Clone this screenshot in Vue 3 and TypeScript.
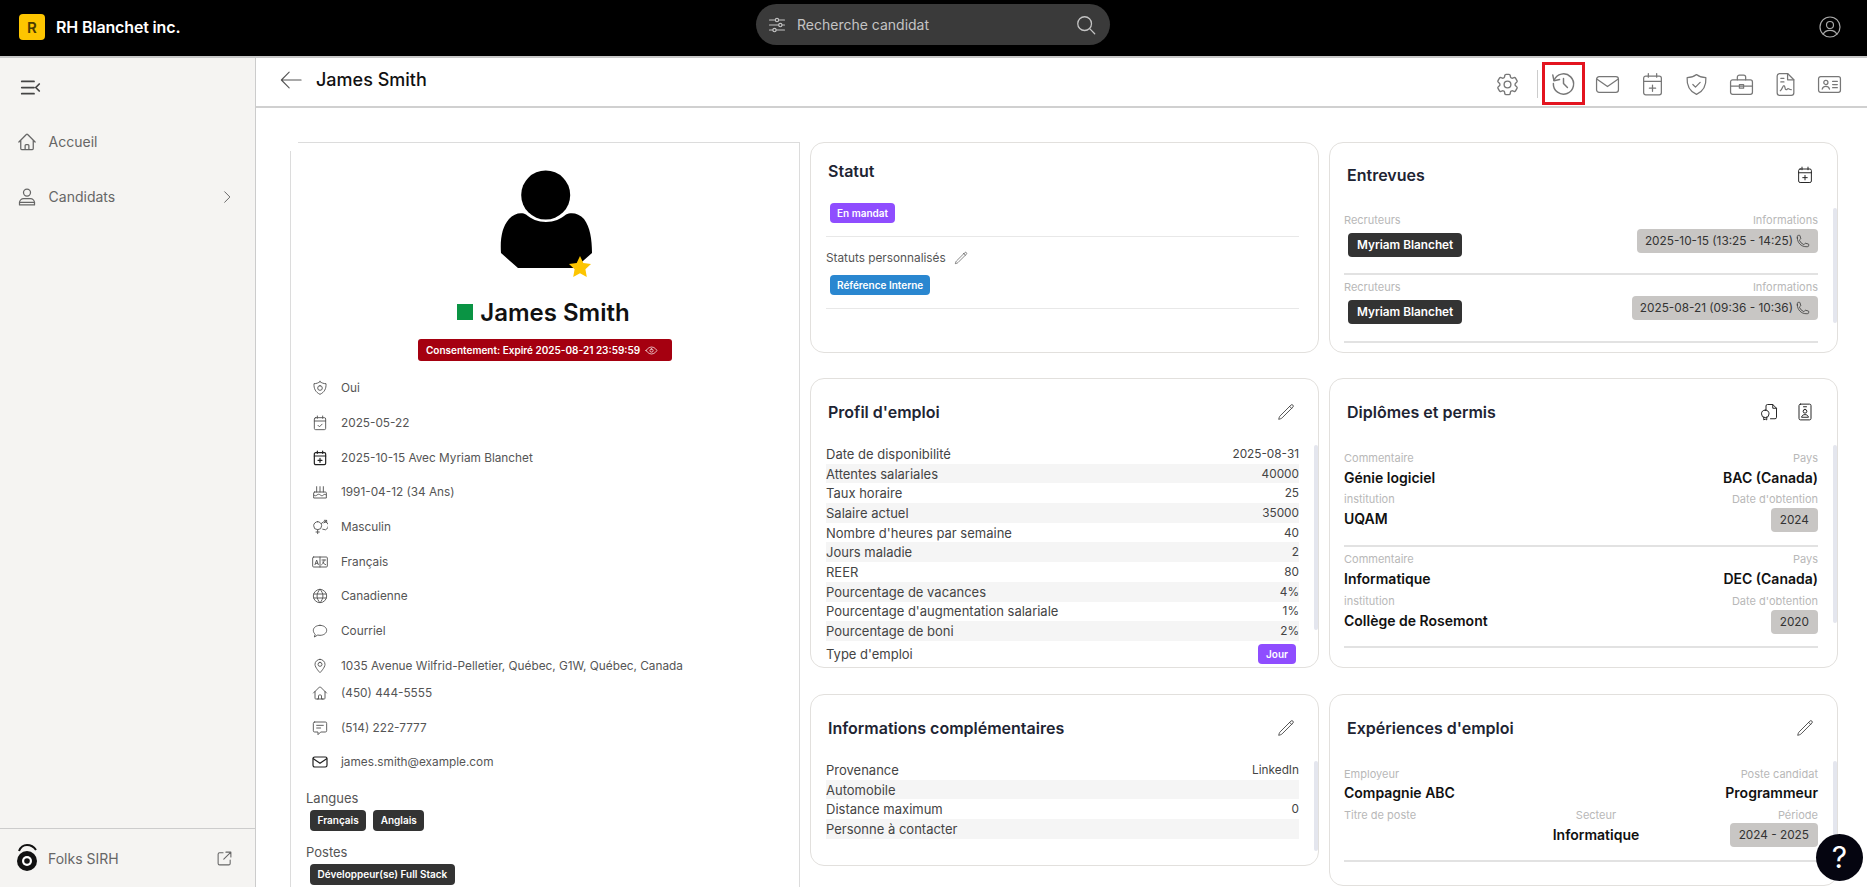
<script setup lang="ts">
import { h } from 'vue'

const icons: Record<string, string[]> = {
  sliders: ['M3 6h7M14 6h7M3 12h11M18 12h3M3 18h4M11 18h10', 'M12 4a2 2 0 1 1 0 4a2 2 0 1 1 0-4Z', 'M16 10a2 2 0 1 1 0 4a2 2 0 1 1 0-4Z', 'M9 16a2 2 0 1 1 0 4a2 2 0 1 1 0-4Z'],
  search: ['M10.5 3a7.5 7.5 0 1 1 0 15a7.5 7.5 0 1 1 0-15Z', 'M16 16l5.5 5.5'],
  account: ['M12 2a10 10 0 1 1 0 20a10 10 0 1 1 0-20Z', 'M12 6.5a3.5 3.5 0 1 1 0 7a3.5 3.5 0 1 1 0-7Z', 'M5.2 19.2c1-2.6 3.6-3.9 6.8-3.9s5.8 1.300 6.800 3.900'],
  gear: ['M9.594 3.94c.09-.542.56-.94 1.11-.94h2.593c.55 0 1.02.398 1.11.94l.213 1.281c.063.374.313.686.645.87.074.04.147.083.22.127.325.196.72.257 1.075.124l1.217-.456a1.125 1.125 0 0 1 1.37.49l1.296 2.247a1.125 1.125 0 0 1-.26 1.431l-1.003.827c-.293.241-.438.613-.43.992a7.723 7.723 0 0 1 0 .255c-.008.378.137.75.43.991l1.004.827c.424.35.534.955.26 1.43l-1.298 2.247a1.125 1.125 0 0 1-1.369.491l-1.217-.456c-.355-.133-.75-.072-1.076.124a6.47 6.47 0 0 1-.22.128c-.331.183-.581.495-.644.869l-.213 1.281c-.09.543-.56.94-1.11.94h-2.594c-.55 0-1.019-.398-1.11-.94l-.213-1.281c-.062-.374-.312-.686-.644-.87a6.52 6.52 0 0 1-.22-.127c-.325-.196-.72-.257-1.076-.124l-1.217.456a1.125 1.125 0 0 1-1.369-.49l-1.297-2.247a1.125 1.125 0 0 1 .26-1.431l1.004-.827c.292-.24.437-.613.43-.991a6.932 6.932 0 0 1 0-.255c.007-.38-.138-.751-.43-.992l-1.004-.827a1.125 1.125 0 0 1-.26-1.43l1.297-2.247a1.125 1.125 0 0 1 1.37-.491l1.216.456c.356.133.751.072 1.076-.124.072-.044.146-.086.22-.128.332-.183.582-.495.644-.869l.214-1.28Z', 'M15 12a3 3 0 1 1-6 0 3 3 0 0 1 6 0Z'],
  history: ['M3.6 9.200A9 9 0 1 1 3 12', 'M2.500 4.500l1 5 5-1', 'M12 7.500V12l3.500 3.500'],
  mail: ['M4 4.500h16a2.500 2.500 0 0 1 2.500 2.500v10a2.500 2.500 0 0 1-2.500 2.500H4A2.500 2.500 0 0 1 1.500 17V7A2.500 2.500 0 0 1 4 4.500Z', 'M2 7l10 7 10-7'],
  calPlus: ['M5.500 4h13A2 2 0 0 1 20.500 6v14a2 2 0 0 1-2 2h-13a2 2 0 0 1-2-2V6a2 2 0 0 1 2-2Z', 'M3.500 9h17M8 1.500V5M16 1.500V5M12 12.500v6M9 15.500h6'],
  calCheck: ['M5.500 4h13A2 2 0 0 1 20.500 6v14a2 2 0 0 1-2 2h-13a2 2 0 0 1-2-2V6a2 2 0 0 1 2-2Z', 'M3.500 9h17M8 1.500V5M16 1.500V5M9 15.500l2.200 2.200 4-4'],
  shield: ['M12 2.500c2.500 2 5.500 3 9 3 .5 7.500-2.500 13-9 16-6.500-3-9.500-8.500-9-16 3.500 0 6.500-1 9-3Z', 'M8.500 12l2.500 2.500 4.500-4.500'],
  shieldEye: ['M12 2.500c2.500 2 5.500 3 9 3 .5 7.500-2.500 13-9 16-6.500-3-9.500-8.500-9-16 3.500 0 6.500-1 9-3Z', 'M12 8.500a3.500 3.500 0 1 1 0 7a3.500 3.500 0 1 1 0-7Z'],
  briefcase: ['M3.500 7.500h17a2 2 0 0 1 2 2v10a2 2 0 0 1-2 2h-17a2 2 0 0 1-2-2v-10a2 2 0 0 1 2-2Z', 'M8 7.500V5a2 2 0 0 1 2-2h4a2 2 0 0 1 2 2v2.500M1.500 13.500h21', 'M10 12h4v3.500h-4Z'],
  fileSign: ['M6 1.500h8l6 6V20a2.500 2.500 0 0 1-2.500 2.500h-11A2.500 2.500 0 0 1 4 20V4a2.500 2.500 0 0 1 2-2.500Z', 'M14 1.500V7.500h6M7.500 6h3M7.500 9.500h3M7 18c2-1 2-5 3.500-5s.5 4 2 4 1-1 2-1 1 1 3 1'],
  idCard: ['M3.500 4.500h17a2 2 0 0 1 2 2v11a2 2 0 0 1-2 2h-17a2 2 0 0 1-2-2v-11a2 2 0 0 1 2-2Z', 'M8.500 8a2 2 0 1 1 0 4a2 2 0 1 1 0-4Z', 'M5 16.500c.5-2 2-2.700 3.500-2.700s3 .7 3.500 2.700M15 9h4.500M15 12h4.500M15 15h4.500'],
  back: ['M23 12H2M10 3.500L1.500 12l8.500 8.500'],
  collapse: ['M2 5h14M2 12h14M2 19h14M22 8l-4 4 4 4'],
  home: ['m2.250 12 8.954-8.955c.44-.439 1.152-.439 1.591 0L21.750 12M4.500 9.750v10.125c0 .621.504 1.125 1.125 1.125H9.750v-4.875c0-.621.504-1.125 1.125-1.125h2.250c.621 0 1.125.504 1.125 1.125V21h4.125c.621 0 1.125-.504 1.125-1.125V9.750M8.250 21h8.250'],
  user: ['M12 2.500a4.200 4.200 0 1 1 0 8.400a4.200 4.200 0 1 1 0-8.400Z', 'M8 14h8a5 5 0 0 1 5 5v2.500H3V19a5 5 0 0 1 5-5Z', 'M3 18.500h18'],
  chevron: ['M8 3l9 9-9 9'],
  pencil: ['m16.862 4.487 1.687-1.688a1.875 1.875 0 1 1 2.652 2.652L6.832 19.820a4.500 4.500 0 0 1-1.897 1.130l-2.685.8.8-2.685a4.500 4.500 0 0 1 1.130-1.897L16.863 4.487Zm0 0L19.500 7.125'],
  external: ['M10 4H5a2 2 0 0 0-2 2v13a2 2 0 0 0 2 2h13a2 2 0 0 0 2-2v-5', 'M14 3h7v7M21 3L11 13'],
  phone: ['M2.250 6.750c0 8.284 6.716 15 15 15h2.250a2.250 2.250 0 0 0 2.250-2.250v-1.372c0-.516-.351-.966-.852-1.091l-4.423-1.106c-.44-.11-.902.055-1.173.417l-.97 1.293c-.282.376-.769.542-1.210.38a12.035 12.035 0 0 1-7.143-7.143c-.162-.441.004-.928.38-1.210l1.293-.97c.363-.271.527-.734.417-1.173L6.963 3.102a1.125 1.125 0 0 0-1.091-.852H4.500A2.250 2.250 0 0 0 2.250 4.500v2.250Z'],
  eye: ['M2 12s3.500-6.500 10-6.500S22 12 22 12s-3.500 6.500-10 6.500S2 12 2 12Z', 'M12 9a3 3 0 1 1 0 6a3 3 0 1 1 0-6Z'],
  cake: ['M4 12h16a1.500 1.500 0 0 1 1.500 1.500V21h-19v-7.500A1.500 1.500 0 0 1 4 12Z', 'M2.500 16.500c3 1.500 3 1.500 5 0s3-1.500 5 0 3 1.500 4.500 0 3-1 4.500 0M7 4v8M12 4v8M17 4v8'],
  gender: ['M8.500 4a6 6 0 1 1 0 12a6 6 0 1 1 0-12Z', 'M8.500 16v6M6 19.500h5M14 6.500a6 6 0 1 1 2 9M18 6l4-4M18.500 2H22v3.500'],
  lang: ['M2.500 4.500h19a1.500 1.500 0 0 1 1.500 1.500v12a1.500 1.500 0 0 1-1.500 1.500h-19A1.500 1.500 0 0 1 1 18V6a1.500 1.500 0 0 1 1.500-1.500Z', 'M12 4.500v15M4.500 16l2.500-7 2.500 7M5.500 14h3M15 9h5.500M18 9v1c0 3-2 5-3.500 6M16 12c.800 1.700 2 3 4.500 4'],
  globe: ['M12 2a10 10 0 1 1 0 20a10 10 0 1 1 0-20Z', 'M2.500 9h19M2.500 15h19M12 2c-6 6-6 14 0 20M12 2c6 6 6 14 0 20'],
  bubble: ['M12 3.500c5.500 0 10 3.200 10 7.500s-4.500 7.500-10 7.500c-1.200 0-2.300-.15-3.400-.45L3.500 21l1.300-4.200C3 15.400 2 13.300 2 11c0-4.300 4.500-7.500 10-7.500Z'],
  pin: ['M12 2a7.500 7.500 0 0 1 7.500 7.500c0 5-7.500 12.500-7.500 12.500S4.500 14.500 4.500 9.500A7.500 7.500 0 0 1 12 2Z', 'M12 6.500a3 3 0 1 1 0 6a3 3 0 1 1 0-6Z'],
  sms: ['M4 3h16a2 2 0 0 1 2 2v11a2 2 0 0 1-2 2h-7l-4 4v-4H4a2 2 0 0 1-2-2V5a2 2 0 0 1 2-2Z', 'M7 8h10M7 12h6'],
  degree: ['M8 10V4a2 2 0 0 1 2-2h7l5 5v12a2 2 0 0 1-2 2h-6', 'M17 2v5h5', 'M7 9.500a5 5 0 1 1 0 10a5 5 0 1 1 0-10Z', 'M5 19v3.500l2-1 2 1V19'],
  badge: ['M6 1.500h12a2 2 0 0 1 2 2v17a2 2 0 0 1-2 2H6a2 2 0 0 1-2-2v-17a2 2 0 0 1 2-2Z', 'M10 5h4', 'M12 8.500a2.500 2.500 0 1 1 0 5a2.500 2.500 0 1 1 0-5Z', 'M7.500 18.500c.4-2 2.200-3 4.500-3s4.100 1 4.500 3Z'],
}

const Ico = (props: { n: string; s?: number; w?: number }) =>
  h(
    'svg',
    { viewBox: '0 0 24 24', width: props.s ?? 18, height: props.s ?? 18, fill: 'none', stroke: 'currentColor', 'stroke-width': props.w ?? 1.5, 'stroke-linecap': 'round', 'stroke-linejoin': 'round' },
    (icons[props.n] ?? []).map((d) => h('path', { d })),
  )
Ico.props = ['n', 's', 'w']

const toolIcons = ['mail', 'calPlus', 'shield', 'briefcase', 'fileSign', 'idCard']

const facts = [
  { i: 'shieldEye', t: 'Oui' },
  { i: 'calCheck', t: '2025-05-22' },
  { i: 'calPlus', t: '2025-10-15 Avec Myriam Blanchet', dark: true },
  { i: 'cake', t: '1991-04-12 (34 Ans)' },
  { i: 'gender', t: 'Masculin' },
  { i: 'lang', t: 'Français' },
  { i: 'globe', t: 'Canadienne' },
  { i: 'bubble', t: 'Courriel' },
  { i: 'pin', t: '1035 Avenue Wilfrid-Pelletier, Québec, G1W, Québec, Canada', tight: true },
  { i: 'home', t: '(450) 444-5555' },
  { i: 'sms', t: '(514) 222-7777' },
  { i: 'mail', t: 'james.smith@example.com', dark: true },
]

const profile = [
  ['Date de disponibilité', '2025-08-31'],
  ['Attentes salariales', '40000'],
  ['Taux horaire', '25'],
  ['Salaire actuel', '35000'],
  ["Nombre d'heures par semaine", '40'],
  ['Jours maladie', '2'],
  ['REER', '80'],
  ['Pourcentage de vacances', '4%'],
  ["Pourcentage d'augmentation salariale", '1%'],
  ['Pourcentage de boni', '2%'],
]

const extra = [
  ['Provenance', 'LinkedIn'],
  ['Automobile', ''],
  ['Distance maximum', '0'],
  ['Personne à contacter', ''],
]

const interviews = ['2025-10-15 (13:25 - 14:25)', '2025-08-21 (09:36 - 10:36)']

const diplomas = [
  { c: 'Génie logiciel', p: 'BAC (Canada)', i: 'UQAM', d: '2024' },
  { c: 'Informatique', p: 'DEC (Canada)', i: 'Collège de Rosemont', d: '2020' },
]
</script>

<template>
  <div class="app">
    <header class="topbar">
      <div class="brand">
        <span class="logo">R</span>
        <span class="brand-name">RH Blanchet inc.</span>
      </div>
      <div class="search">
        <Ico n="sliders" :s="20" :w="1.3" />
        <span class="search-text">Recherche candidat</span>
        <Ico n="search" :s="22" :w="1.4" class="search-ico" />
      </div>
      <Ico n="account" :s="24" :w="1.2" class="account" />
    </header>

    <div class="shell">
      <aside class="sidebar">
        <Ico n="collapse" :s="21" :w="2" class="collapse" />
        <nav class="nav">
          <div class="nav-item"><Ico n="home" :s="20" /><span>Accueil</span></div>
          <div class="nav-item">
            <Ico n="user" :s="20" /><span>Candidats</span>
            <Ico n="chevron" :s="14" class="nav-chev" />
          </div>
        </nav>
        <div class="side-foot">
          <svg class="folks" width="24" height="30" viewBox="0 0 24 30">
            <circle cx="12" cy="18" r="10" fill="#111" />
            <circle cx="12" cy="18" r="5" fill="#fff" />
            <circle cx="12" cy="18" r="2.800" fill="#111" />
            <path d="M4 8c2-5 5-6 8-6s7 2 9 5" fill="none" stroke="#111" stroke-width="2" />
          </svg>
          <span>Folks SIRH</span>
          <Ico n="external" :s="17" class="ext" />
        </div>
      </aside>

      <main class="main">
        <div class="toolbar">
          <Ico n="back" :s="22" :w="1.2" class="back" />
          <span class="tool-title">James Smith</span>
          <div class="tools">
            <span class="tool"><Ico n="gear" :s="27" :w="1.2" /></span>
            <span class="tool-sep"></span>
            <span class="tool active"><Ico n="history" :s="27" :w="1.3" /></span>
            <span v-for="t in toolIcons" :key="t" class="tool"><Ico :n="t" :s="25" :w="1.2" /></span>
          </div>
        </div>

        <div class="content">
          <section class="panel">
            <svg class="avatar" width="100" height="110" viewBox="0 0 100 110">
              <circle cx="50.700" cy="26" r="24.500" fill="#000" />
              <path d="M23 99 L6 84 C5 70 7 58 14 50 C19 44 27 43 31 45.500 C36 50 43 53 51 53 C59 53 66 50 71 45.500 C76 43 84 44 89 50 C95 58 97 70 97 84 L80 99 Z" fill="#000" />
              <path d="M85 87l3.300 7 7.700 1-5.600 5.300 1.400 7.700-6.800-3.700-6.800 3.700 1.400-7.700-5.600-5.300 7.700-1Z" fill="#fdc500" />
            </svg>
            <div class="hero-name"><span class="dot"></span>James Smith</div>
            <div class="consent">
              <span>Consentement: Expiré 2025-08-21 23:59:59</span>
              <Ico n="eye" :s="13" :w="1.3" />
            </div>
            <ul class="facts">
              <li v-for="f in facts" :key="f.t" class="fact" :class="{ tight: f.tight }">
                <span class="fact-ico" :class="{ dark: f.dark }"><Ico :n="f.i" :s="16" :w="f.dark ? 1.8 : 1.4" /></span>
                <span>{{ f.t }}</span>
              </li>
            </ul>
            <div class="tag-title">Langues</div>
            <div class="tags"><span class="chip">Français</span><span class="chip">Anglais</span></div>
            <div class="tag-title second">Postes</div>
            <div class="tags"><span class="chip">Développeur(se) Full Stack</span></div>
          </section>

          <div class="col">
            <section class="card statut">
              <div class="head short"><h2>Statut</h2></div>
              <div class="statut-block first"><span class="badge purple">En mandat</span></div>
              <div class="statut-label">Statuts personnalisés <Ico n="pencil" :s="14" :w="1.2" class="mini-pen" /></div>
              <div class="statut-block second"><span class="badge blue">Référence Interne</span></div>
            </section>

            <section class="card profil">
              <div class="head"><h2>Profil d'emploi</h2><Ico n="pencil" :s="18" :w="1.2" /></div>
              <div class="rows">
                <div v-for="r in profile" :key="r[0]" class="row"><span>{{ r[0] }}</span><span class="num">{{ r[1] }}</span></div>
                <div class="row last"><span>Type d'emploi</span><span class="badge purple jour">Jour</span></div>
              </div>
              <span class="thumb thumb-profil"></span>
            </section>

            <section class="card extra">
              <div class="head"><h2>Informations complémentaires</h2><Ico n="pencil" :s="18" :w="1.2" /></div>
              <div class="rows">
                <div v-for="r in extra" :key="r[0]" class="row"><span>{{ r[0] }}</span><span class="num">{{ r[1] }}</span></div>
              </div>
              <span class="thumb thumb-extra"></span>
            </section>
          </div>

          <div class="col">
            <section class="card entrevues">
              <div class="head ent"><h2>Entrevues</h2><Ico n="calPlus" :s="18" :w="1.3" class="dark-ico" /></div>
              <div class="list ent-list">
                <div v-for="d in interviews" :key="d" class="interview">
                  <div>
                    <div class="lbl">Recruteurs</div>
                    <span class="chip big">Myriam Blanchet</span>
                  </div>
                  <div class="right">
                    <div class="lbl">Informations</div>
                    <span class="pill">{{ d }}<Ico n="phone" :s="14" :w="1.3" /></span>
                  </div>
                </div>
              </div>
              <span class="thumb thumb-ent"></span>
            </section>

            <section class="card diplomes">
              <div class="head"><h2>Diplômes et permis</h2>
                <div class="head-icons"><Ico n="degree" :s="18" :w="1.3" class="dark-ico" /><Ico n="badge" :s="18" :w="1.3" class="dark-ico" /></div>
              </div>
              <div class="list">
                <div v-for="d in diplomas" :key="d.c" class="detail">
                  <div class="lbl">Commentaire</div><div class="lbl right">Pays</div>
                  <div class="val">{{ d.c }}</div><div class="val right">{{ d.p }}</div>
                  <div class="lbl gap">institution</div><div class="lbl gap right">Date d'obtention</div>
                  <div class="val">{{ d.i }}</div><div class="right"><span class="pill sm">{{ d.d }}</span></div>
                </div>
              </div>
              <span class="thumb thumb-dip"></span>
            </section>

            <section class="card experience">
              <div class="head"><h2>Expériences d'emploi</h2><Ico n="pencil" :s="18" :w="1.2" /></div>
              <div class="list">
                <div class="detail three">
                  <div class="lbl">Employeur</div><div></div><div class="lbl right">Poste candidat</div>
                  <div class="val">Compagnie ABC</div><div></div><div class="val right">Programmeur</div>
                  <div class="lbl gap">Titre de poste</div><div class="lbl gap center">Secteur</div><div class="lbl gap right">Période</div>
                  <div></div><div class="val center">Informatique</div><div class="right"><span class="pill sm">2024 - 2025</span></div>
                </div>
              </div>
              <span class="thumb thumb-exp"></span>
            </section>
          </div>
        </div>
      </main>
    </div>
    <button class="help">?</button>
  </div>
</template>

<style>
html, body { margin: 0; overflow: hidden; }
</style>

<style scoped>
* { box-sizing: border-box; }
.app { height: 100vh; display: flex; flex-direction: column; overflow: hidden; position: relative; font-family: Inter, "Liberation Sans", sans-serif; color: #333; background: #fff; }

.topbar { height: 58px; flex: none; background: #000; border-bottom: 2px solid #c8c8c8; display: flex; align-items: center; padding: 0 25px 2px 19px; position: relative; }
.brand { display: flex; align-items: center; gap: 11px; margin-right: auto; }
.logo { width: 26px; height: 26px; border-radius: 4px; background: #fdc500; color: #4a3a00; font-size: 15px; font-weight: 600; display: flex; align-items: center; justify-content: center; }
.brand-name { color: #fff; font-size: 16px; font-weight: 600; letter-spacing: -0.15px; }
.search { position: absolute; left: 756px; top: 4px; width: 354px; height: 41px; border-radius: 21px; background: #3a3a3a; color: #c4c4c4; display: flex; align-items: center; padding: 0 13px 0 11px; gap: 10px; font-size: 14px; }
.search-ico { margin-left: auto; }
.account { color: #aaa; }

.shell { flex: 1; display: flex; min-height: 0; }
.sidebar { width: 256px; flex: none; background: #f5f4f2; border-right: 1px solid #ccc; display: flex; flex-direction: column; color: #666; font-size: 14px; padding-top: 19px; }
.collapse { margin-left: 20px; color: #444; }
.nav { margin-top: 16px; display: flex; flex-direction: column; }
.nav-item { height: 55px; display: flex; align-items: center; padding: 0 21px 0 17px; gap: 11.600px; }
.nav-chev { margin-left: auto; color: #555; }
.side-foot { margin-top: auto; height: 59px; border-top: 1px solid #ccc; display: flex; align-items: center; padding: 0 22px 0 15px; gap: 9px; }
.folks { flex: none; }
.ext { margin-left: auto; }

.main { flex: 1; min-width: 0; display: flex; flex-direction: column; }
.toolbar { height: 50px; flex: none; border-bottom: 2px solid #d0d0d0; display: flex; align-items: center; padding: 0 15px 0 24px; }
.back { color: #555; margin-bottom: 5px; }
.tool-title { margin-left: 14px; font-size: 18px; font-weight: 500; color: #111; margin-bottom: 5px; }
.tools { margin-left: auto; align-self: flex-start; margin-top: 4px; display: flex; align-items: center; color: #777; }
.tool { width: 44.400px; height: 43px; padding-top: 1px; display: flex; align-items: center; justify-content: center; }
.tool-sep { width: 1px; height: 28px; background: #ccc; margin: 0 4px 0 7px; }
.tool.active { width: 43px; margin-right: 0.700px; border: 3px solid #e3141f; padding-top: 0; }

.content { display: grid; grid-template-columns: 510px 509px 509px; column-gap: 10px; padding: 34px 0 0 34px; align-items: start; }
.panel { position: relative; height: 900px; border: 1px solid #dcdcdc; border-bottom: 0; display: flex; flex-direction: column; align-items: center; padding-top: 26px; }
.panel::before { content: ""; position: absolute; left: -1px; top: -1px; width: 8px; height: 9px; background: #fff; }
.avatar { flex: none; }
.hero-name { margin: 15px 0 0 -3px; display: flex; align-items: center; gap: 7px; font-size: 24px; font-weight: 600; color: #111; height: 36px; }
.dot { width: 16px; height: 16px; background: #0a9444; }
.consent { margin-top: 9px; width: 254px; height: 22px; border-radius: 3px; background: #a50010; color: #fff; display: flex; align-items: center; padding: 0 14px 0 8px; justify-content: space-between; font-size: 10px; font-weight: 600; white-space: nowrap; }
.facts { list-style: none; margin: 10px 0 0; padding: 0 0 0 20px; width: 100%; font-size: 11.800px; color: #555; }
.fact { height: 34.700px; display: flex; align-items: center; gap: 12px; }
.fact.tight { margin-bottom: -7.500px; }
.fact-ico { width: 18px; display: flex; justify-content: center; color: #555; }
.fact-ico.dark { color: #222; }
.tag-title { align-self: flex-start; margin: 10px 0 0 15px; height: 16px; line-height: 16px; font-size: 13px; color: #555; }
.tag-title.second { margin-top: 13px; }
.tags { align-self: flex-start; margin: 4px 0 0 19px; display: flex; gap: 7px; }
.chip { display: inline-flex; align-items: center; height: 21px; padding: 0 7.500px; border-radius: 4px; background: #333; color: #fff; font-size: 10px; font-weight: 600; white-space: nowrap; }
.chip.big { height: 24px; font-size: 11.800px; padding: 0 9px; margin: 6px 0 0 4px; }

.col { display: flex; flex-direction: column; gap: 25px; }
.card { position: relative; border: 1.500px solid #e2e0dd; border-radius: 14px; overflow: hidden; background: #fff; }
.statut { height: 211px; }
.profil { height: 290px; }
.extra { height: 172px; }
.entrevues { height: 211px; }
.diplomes { height: 290px; }
.experience { height: 192px; }
.col + .col .card:nth-child(3) { margin-top: 1px; }
.col .extra { margin-top: 1px; }
.head { height: 66px; display: flex; align-items: center; justify-content: space-between; padding: 0 23px 0 17px; color: #444; }
.head.short { height: 56px; }
.head.ent { height: 64.500px; }
.head + .rows { margin-top: -1px; }
h2 { margin: 0; font-size: 16px; font-weight: 600; color: #1e2433; }
.head-icons { display: flex; gap: 18px; }
.dark-ico { color: #222; }

.badge { display: inline-flex; align-items: center; height: 20px; padding: 0 7px; border-radius: 4px; color: #fff; font-size: 10px; font-weight: 600; }
.purple { background: #8f4dff; }
.blue { background: #2a87d0; }
.statut-block { margin: 0 19px 0 15px; padding: 2px 0 13px 4px; border-bottom: 1px solid #e8e8e8; }
.statut-block.second { padding-top: 0; }
.statut-label { margin: 12px 0 6px 15px; display: flex; align-items: center; gap: 9px; font-size: 11.800px; color: #555; height: 18px; }
.mini-pen { color: #555; margin-left: -1px; }

.rows { margin: -2px 19px 0 15px; font-size: 13px; color: #444; }
.row { height: 19.700px; display: flex; align-items: center; justify-content: space-between; }
.row:nth-child(even) { background: #f5f5f5; }
.row.last { height: 27px; background: none; padding-right: 3px; }
.num { font-size: 11.800px; }
.jour { padding: 0 8px; }

.thumb { position: absolute; right: 0; width: 4px; border-radius: 2px; background: #e4e6ee; }
.thumb-profil { top: 66px; height: 185px; }
.thumb-extra { top: 66px; height: 90px; }
.thumb-ent { top: 65px; height: 115px; right: 0; }
.thumb-dip { top: 66px; height: 178px; }
.thumb-exp { top: 66px; height: 130px; }

.list { margin: 1px 19px 0 14px; }
.list.ent-list { margin-top: 0; }
.interview { height: 67.500px; border-bottom: 2px solid #e2e2e2; padding-top: 5px; display: flex; justify-content: space-between; }
.lbl { font-size: 11px; line-height: 14px; color: #b8b8b8; }
.right { text-align: right; }
.center { text-align: center; }
.pill { display: inline-flex; align-items: center; gap: 3px; height: 24px; padding: 0 8px; border-radius: 4px; background: #c8c6c4; font-size: 11.800px; color: #333; margin-top: 2px; }
.pill.sm { padding: 0 9px; margin-top: 2px; }
.detail { display: grid; grid-template-columns: 1fr 1fr; border-bottom: 2px solid #e2e2e2; height: 101px; padding-top: 5px; align-content: start; }
.detail + .detail .gap { margin-top: 5px; }
.three { grid-template-columns: 165px 174px 1fr; height: 100px; }
.val { font-size: 14px; line-height: 20px; font-weight: 600; color: #111; margin-top: 3px; white-space: nowrap; }
.gap { margin-top: 4px; }
.three .val { margin-top: 2px; }
.three .val.center { margin-top: 3px; }
.three .gap { margin-top: 5px; }
.three .pill.sm { margin-top: 1px; }

.help { position: absolute; left: 1816px; top: 834px; width: 47px; height: 47px; border-radius: 50%; border: 0; background: #050510; color: #fff; font-family: Inter, sans-serif; font-size: 30px; line-height: 47px; padding: 0; text-align: center; }
</style>
